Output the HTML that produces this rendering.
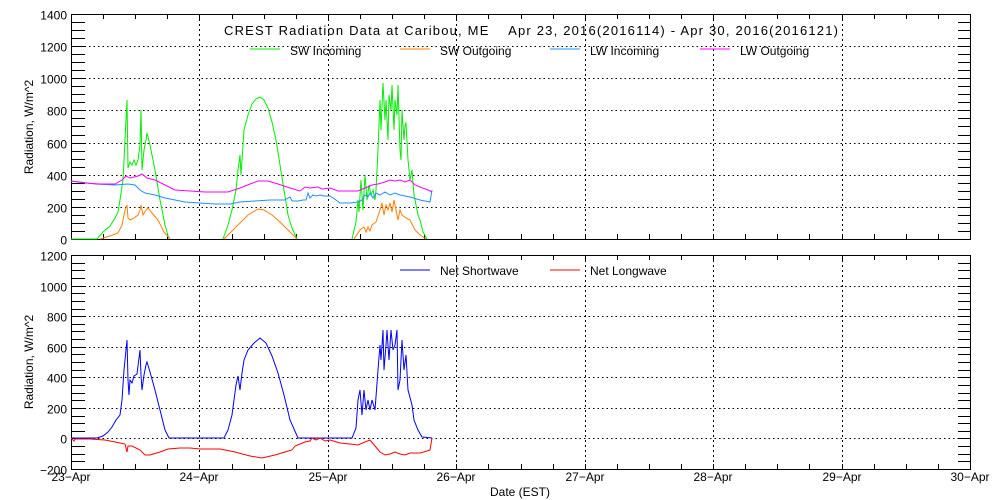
<!DOCTYPE html>
<html><head><meta charset="utf-8"><style>
html,body{margin:0;padding:0;background:#fff;}
svg{display:block;font-family:"Liberation Sans",sans-serif;font-size:12px;}
</style></head><body>
<svg id="s" width="1000" height="500" xmlns="http://www.w3.org/2000/svg">
<rect width="1000" height="500" fill="#fff"/>
<g id="g"></g>
<text x="224" y="35" font-size="13" textLength="614" lengthAdjust="spacing" style="white-space:pre">CREST Radiation Data at Caribou, ME    Apr 23, 2016(2016114) - Apr 30, 2016(2016121)</text>
<line x1="250" y1="49" x2="280" y2="49" stroke="#00ee00"/><text x="290" y="55">SW Incoming</text>
<line x1="400" y1="49" x2="430" y2="49" stroke="#ff7f00"/><text x="440" y="55">SW Outgoing</text>
<line x1="550" y1="49" x2="580" y2="49" stroke="#1e90ff"/><text x="590" y="55">LW Incoming</text>
<line x1="700" y1="49" x2="730" y2="49" stroke="#ff00ff"/><text x="740" y="55">LW Outgoing</text>
<line x1="400" y1="270" x2="430" y2="270" stroke="#0000ff"/><text x="440" y="275">Net Shortwave</text>
<line x1="550" y1="270" x2="580" y2="270" stroke="#ff0000"/><text x="590" y="275">Net Longwave</text>
<text transform="translate(33,127) rotate(-90)" text-anchor="middle">Radiation, W/m^2</text>
<text transform="translate(33,362) rotate(-90)" text-anchor="middle">Radiation, W/m^2</text>
<text x="520" y="496" text-anchor="middle">Date (EST)</text>
<polyline fill="none" stroke="#00ee00" points="71,239 97,239 103,232 110,226 115,218 118,212 120,200 123,180 125,140 127,100 128,168 130,162 132,165 134,160 136,165 138,160 140,145 141,110 142,170 144,150 146,140 147,133 150,145 155,170 160,200 165,225 169,239"/>
<polyline fill="none" stroke="#00ee00" points="223,239 228,225 232,210 236,190 238,170 240,155 241,175 242,160 244,130 248,115 252,104 256,99 260,97 264,100 268,108 272,122 276,140 280,165 284,190 288,215 292,228 297,239"/>
<polyline fill="none" stroke="#00ee00" points="352,239 356,222 358,200 359,212 361,180 363,210 365,175 367,200 369,185 371,195 373,190 375,200 376,190 378,150 380,100 381,130 383,83 385,120 386,100 388,140 389,95 391,110 392,85 394,130 395,100 397,115 398,85 400,150 401,160 402,110 404,140 405,125 406,123 408,160 410,180 412,170 414,195 416,205 418,215 420,220 423,232 427,239"/>
<polyline fill="none" stroke="#ff7f00" points="100,239 110,236 118,233 122,225 125,210 127,205 128,218 130,220 134,218 138,215 140,210 141,205 143,215 146,210 148,208 152,213 158,220 164,232 170,239"/>
<polyline fill="none" stroke="#ff7f00" points="224,239 235,228 248,215 258,209 264,210 272,215 280,222 288,230 297,239"/>
<polyline fill="none" stroke="#ff7f00" points="354,239 360,230 364,227 366,232 368,227 370,231 372,225 376,222 380,210 382,203 384,215 386,205 388,210 390,203 392,212 394,200 396,210 398,220 400,210 402,215 406,218 410,220 415,230 420,235 426,239"/>
<polyline fill="none" stroke="#1e90ff" points="71,181 80,182 95,184 115,185 128,184 135,185 140,190 145,193 155,195 165,198 175,200 185,202 200,203 215,204 230,204 240,202 255,201 270,200 285,200 290,197 292,201 298,201 303,200 306,200 308,193 310,198 313,195 316,196 320,195 324,196 330,196 336,200 340,203 350,203 358,202 362,200 365,195 368,197 370,193 373,198 376,193 380,195 385,192 390,195 395,193 400,195 410,197 420,200 430,202 432,190"/>
<polyline fill="none" stroke="#ff00ff" points="71,181 85,183 100,184 115,184 122,180 126,176 130,178 138,176 142,174 147,178 155,180 165,185 175,190 190,191 205,192 228,192 240,188 250,184 258,181 268,181 278,184 290,188 300,191 305,187 310,188 318,187 322,189 330,188 338,191 358,191 365,188 372,185 378,184 385,182 390,180 395,181 400,180 405,182 410,180 415,185 420,187 428,190 432,192"/>
<polyline fill="none" stroke="#0000ff" points="71,438 97,438 103,436 108,432 112,427 116,420 120,415 122,400 124,370 126,350 127,340 128,380 129,395 130,380 132,383 134,376 137,374 140,350 141,375 142,390 144,375 146,365 147,362 150,372 155,390 160,410 165,430 169,438 224,438 228,430 232,415 236,385 238,376 240,390 242,373 244,360 248,350 254,343 260,338 266,343 272,356 278,373 284,395 290,420 298,438 352,438 356,428 358,400 360,390 362,415 364,390 366,410 368,400 370,410 372,400 375,410 378,370 380,345 381,360 383,330 384,370 386,345 387,330 389,360 391,330 393,350 395,345 397,330 398,390 400,380 402,340 404,370 406,355 408,390 412,405 414,420 418,430 422,437 432,438"/>
<polyline fill="none" stroke="#ff0000" points="71,438 74,441 75,439 90,439 105,440 115,442 125,444 127,452 128,446 132,446 140,450 145,455 150,455 160,452 168,449 180,448 190,448 200,449 220,449 235,452 250,456 262,458 275,455 285,452 292,450 295,446 300,444 305,442 310,441 312,438 316,440 320,438 325,441 330,440 340,443 350,444 358,445 365,442 370,440 375,446 380,452 385,455 390,454 395,452 400,454 405,455 410,453 420,453 427,451 430,450 432,438"/>
</svg>
<script>
(function(){
var g=document.getElementById('g'),h='';
var L=71,R=970,D=(R-L)/7;
function ln(a,b,c,d,ex){h+='<line x1="'+a+'" y1="'+b+'" x2="'+c+'" y2="'+d+'" stroke="#000" '+(ex||'')+'/>';}
function tx(x,y,t,a){h+='<text x="'+x+'" y="'+y+'" text-anchor="'+a+'">'+t+'</text>';}
var panels=[{t:14,b:239,min:0,max:1400},{t:255,b:469,min:-200,max:1200}];
panels.forEach(function(p,pi){
 var sc=(p.b-p.t)/(p.max-p.min);
 for(var v=p.min;v<=p.max;v+=50){
  var y=p.b-(v-p.min)*sc;y=Math.round(y)+0.5;
  ln(L,y,L+14,y);ln(R-12,y,R,y);
  if(v%200==0){tx(67,y+5,v<0?'\u2212'+(-v):v,'end');
   if(v>p.min&&v<p.max) ln(L,y,R,y,'stroke-dasharray="1.5,3"');}
 }
 for(var i=0;i<=28;i++){var x=Math.round(L+i*D/4)+0.5;
  ln(x,p.t,x,p.t+5);ln(x,p.b-5,x,p.b);
  if(i%4==0&&i>0&&i<28) ln(x,p.t,x,p.b,'stroke-dasharray="2,3"');}
 h+='<rect x="'+(L+0.5)+'" y="'+(p.t+0.5)+'" width="'+(R-L)+'" height="'+(p.b-p.t)+'" fill="none" stroke="#000"/>';
});
for(var d=0;d<=7;d++) tx(Math.round(L+d*D),481,(23+d)+'\u2212Apr','middle');
g.innerHTML=h;
})();
</script>
</body></html>
